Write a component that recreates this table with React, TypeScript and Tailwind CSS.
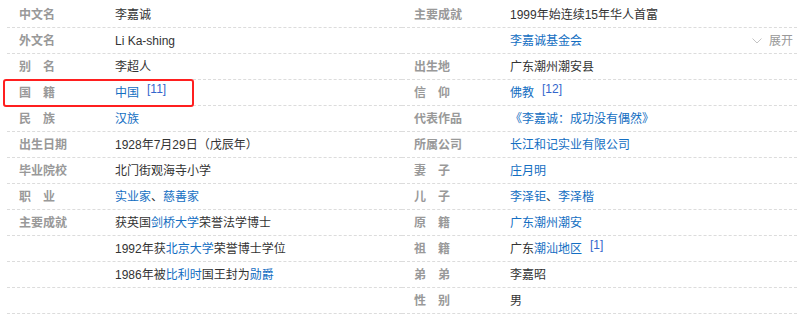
import type { ReactNode } from 'react';

type Seg = string | { link: string };

interface Item {
  name: string;
  value: Seg[];
  sup?: string;
  more?: boolean;
}

const L = (t: string): Seg => ({ link: t });

const leftItems: Item[] = [
  { name: '中文名', value: ['李嘉诚'] },
  { name: '外文名', value: ['Li Ka-shing'] },
  { name: '别\u3000名', value: ['李超人'] },
  { name: '国\u3000籍', value: [L('中国')], sup: '[11]' },
  { name: '民\u3000族', value: [L('汉族')] },
  { name: '出生日期', value: ['1928年7月29日（戊辰年）'] },
  { name: '毕业院校', value: ['北门街观海寺小学'] },
  { name: '职\u3000业', value: [L('实业家'), '、', L('慈善家')] },
  { name: '主要成就', value: ['获英国', L('剑桥大学'), '荣誉法学博士'] },
  { name: '', value: ['1992年获', L('北京大学'), '荣誉博士学位'] },
  { name: '', value: ['1986年被', L('比利时'), '国王封为', L('勋爵')] },
  { name: '', value: [] },
];

const rightItems: Item[] = [
  { name: '主要成就', value: ['1999年始连续15年华人首富'] },
  { name: '', value: [L('李嘉诚基金会')], more: true },
  { name: '出生地', value: ['广东潮州潮安县'] },
  { name: '信\u3000仰', value: [L('佛教')], sup: '[12]' },
  { name: '代表作品', value: [L('《李嘉诚：成功没有偶然》')] },
  { name: '所属公司', value: [L('长江和记实业有限公司')] },
  { name: '妻\u3000子', value: [L('庄月明')] },
  { name: '儿\u3000子', value: [L('李泽钜'), '、', L('李泽楷')] },
  { name: '原\u3000籍', value: [L('广东潮州潮安')] },
  { name: '祖\u3000籍', value: ['广东', L('潮汕地区')], sup: '[1]' },
  { name: '弟\u3000弟', value: ['李嘉昭'] },
  { name: '性\u3000别', value: ['男'] },
];

const renderSeg = (s: Seg, i: number): ReactNode =>
  typeof s === 'string' ? (
    <span key={i}>{s}</span>
  ) : (
    <a key={i} className="text-[#136ec2] no-underline cursor-pointer">
      {s.link}
    </a>
  );

const InfoRow = ({ item }: { item: Item }) => (
  <div className="flex items-center h-[26px] border-b border-dashed border-[#dcdcdc]">
    <div className="w-[108px] shrink-0 pl-3 font-bold text-[#999] whitespace-pre">{item.name}</div>
    <div className="flex-1 flex items-center text-[#333] whitespace-nowrap">
      {item.value.map(renderSeg)}
      {item.sup && (
        <sup className="ml-[8px] text-[12px] leading-[16px] text-[#3366cc] relative top-[-4px]">{item.sup}</sup>
      )}
      {item.more && (
        <span className="ml-auto mr-[4px] flex items-center gap-[7px] text-[#999]">
          <svg width="10" height="6" viewBox="0 0 10 6" fill="none">
            <path d="M0.5 0.5L5 5L9.5 0.5" stroke="#c4c4c4" strokeWidth="1" />
          </svg>
          展开
        </span>
      )}
    </div>
  </div>
);

export default function App() {
  return (
    <div
      className="relative w-[804px] h-[314px] bg-white pt-[2px] px-[7px] text-[12px] leading-[16px]"
      style={{ fontFamily: '"Liberation Sans", Arial, "Noto Sans CJK SC", sans-serif' }}
    >
      <div className="grid grid-cols-2">
        <div className="flex flex-col">
          {leftItems.map((it, i) => (
            <InfoRow key={i} item={it} />
          ))}
        </div>
        <div className="flex flex-col">
          {rightItems.map((it, i) => (
            <InfoRow key={i} item={it} />
          ))}
        </div>
      </div>
      {/* highlight box */}
      <div className="absolute left-[3px] top-[79px] w-[191px] h-[28px] border-2 border-[#ff1f1f] rounded-[3px] pointer-events-none" />
    </div>
  );
}
